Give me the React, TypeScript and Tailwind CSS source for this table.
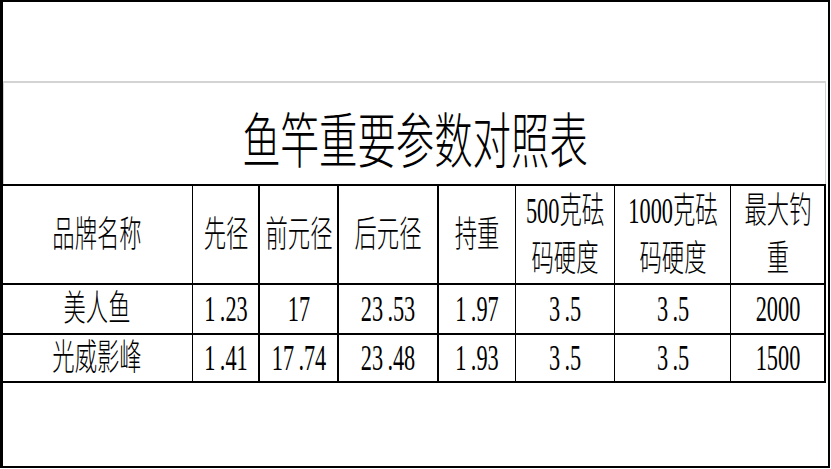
const CELL_FONT = { fontFamily: '"Liberation Serif", "Noto Sans CJK SC", serif' };

// left border per column (first column sits on the page frame)
const COL_BORDER = [
  '',
  'border-l',
  'border-l-2',
  'border-l-2',
  'border-l-2',
  'border-l',
  'border-l',
  'border-l',
];

const HEADER: string[][] = [
  ['品牌名称'],
  ['先径'],
  ['前元径'],
  ['后元径'],
  ['持重'],
  ['500克砝', '码硬度'],
  ['1000克砝', '码硬度'],
  ['最大钓', '重'],
];

const ROWS: string[][] = [
  ['美人鱼', '1.23', '17', '23.53', '1.97', '3.5', '3.5', '2000'],
  ['光威影峰', '1.41', '17.74', '23.48', '1.93', '3.5', '3.5', '1500'],
];

// the source font gives the decimal point a full digit cell
function Num({ text }: { text: string }) {
  const parts = text.split('.');
  if (parts.length < 2) return <>{text}</>;
  return (
    <>
      {parts[0]}
      <span className="pl-[7px]">.</span>
      {parts[1]}
    </>
  );
}

function Squeezed({ lines }: { lines: string[] }) {
  return (
    <span className="inline-block shrink-0 origin-center scale-x-[0.62] whitespace-nowrap text-center text-[36px] font-light leading-[48px] text-black">
      {lines.map((l, i) => (
        <span key={i} className="block">
          <Num text={l} />
        </span>
      ))}
    </span>
  );
}

export default function App() {
  return (
    <div className="w-[830px] h-[468px] bg-white border-l-[3px] border-t-2 border-r-2 border-b-2 border-black flex flex-col">
      <div className="h-[79px] shrink-0" />

      {/* title box */}
      <div className="w-[823px] h-[103px] shrink-0 border-t-2 border-l border-r border-[#d3d3d3] flex items-center justify-center pt-[7px]">
        <span
          className="inline-block shrink-0 origin-center scale-x-[0.64] whitespace-nowrap text-[60px] font-light leading-[72px] text-black"
          style={{ fontFamily: '"Noto Sans CJK SC", sans-serif' }}
        >
          鱼竿重要参数对照表
        </span>
      </div>

      {/* table */}
      <div
        className="w-[823px] shrink-0 grid grid-cols-[189px_66px_79px_100px_78px_99px_116px_94px] border-t-2 border-r-2 border-b-2 border-black"
        style={CELL_FONT}
      >
        {HEADER.map((h, c) => (
          <div key={c} className={`h-[97px] flex items-center justify-center border-black ${COL_BORDER[c]}`}>
            <Squeezed lines={h} />
          </div>
        ))}
        {ROWS.map((row, r) =>
          row.map((v, c) => (
            <div
              key={`${r}-${c}`}
              className={`flex items-center justify-center border-black border-t-2 ${COL_BORDER[c]} ${
                r === 0 ? 'h-[50px]' : 'h-[48px]'
              }`}
            >
              <Squeezed lines={[v]} />
            </div>
          ))
        )}
      </div>
    </div>
  );
}
